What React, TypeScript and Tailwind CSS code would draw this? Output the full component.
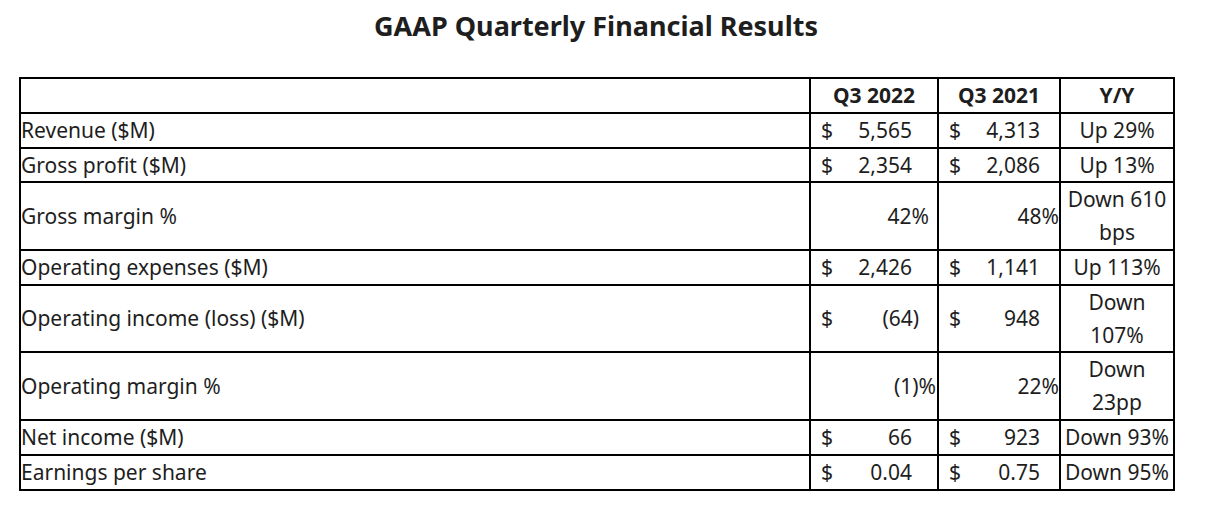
type Money = { v: string; pr: string };

type Row = {
  label: string;
  a: Money | { pct: string; pr: string };
  b: Money | { pct: string; pr: string };
  yy: string[];
};

const rows: Row[] = [
  { label: "Revenue ($M)", a: { v: "5,565", pr: "pr-[25px]" }, b: { v: "4,313", pr: "pr-[19px]" }, yy: ["Up 29%"] },
  { label: "Gross profit ($M)", a: { v: "2,354", pr: "pr-[25px]" }, b: { v: "2,086", pr: "pr-[19px]" }, yy: ["Up 13%"] },
  { label: "Gross margin %", a: { pct: "42%", pr: "pr-[8px]" }, b: { pct: "48%", pr: "pr-0" }, yy: ["Down 610", "bps"] },
  { label: "Operating expenses ($M)", a: { v: "2,426", pr: "pr-[25px]" }, b: { v: "1,141", pr: "pr-[19px]" }, yy: ["Up 113%"] },
  { label: "Operating income (loss) ($M)", a: { v: "(64)", pr: "pr-[18px]" }, b: { v: "948", pr: "pr-[19px]" }, yy: ["Down", "107%"] },
  { label: "Operating margin %", a: { pct: "(1)%", pr: "pr-[1px]" }, b: { pct: "22%", pr: "pr-0" }, yy: ["Down", "23pp"] },
  { label: "Net income ($M)", a: { v: "66", pr: "pr-[25px]" }, b: { v: "923", pr: "pr-[19px]" }, yy: ["Down 93%"] },
  { label: "Earnings per share", a: { v: "0.04", pr: "pr-[25px]" }, b: { v: "0.75", pr: "pr-[19px]" }, yy: ["Down 95%"] },
];

function ValueCell({ c }: { c: Row["a"] }) {
  if ("pct" in c) {
    return (
      <td className={`border-2 border-black p-0 align-middle text-right whitespace-nowrap ${c.pr}`}>
        {c.pct}
      </td>
    );
  }
  return (
    <td className="border-2 border-black p-0 align-middle whitespace-nowrap">
      <div className={`flex justify-between pl-[10px] ${c.pr}`}>
        <span>$</span>
        <span>{c.v}</span>
      </div>
    </td>
  );
}

export default function App() {
  return (
    <div
      className="w-[1212px] h-[512px] bg-white text-[#1e1e1e]"
      style={{ fontFamily: '"Noto Sans", "Open Sans", Arial, sans-serif' }}
    >
      <div className="w-[1154px] ml-[19px]">
        <h2 className="pt-[9px] text-center text-[27px] font-bold leading-[33px]">
          GAAP Quarterly Financial Results
        </h2>
        <table className="mt-[35px] w-[1154px] table-fixed border-collapse border-2 border-black text-[21px] leading-[32.8px]">
          <colgroup>
            <col className="w-[790px]" />
            <col className="w-[128px]" />
            <col className="w-[122px]" />
            <col className="w-[114px]" />
          </colgroup>
          <thead>
            <tr>
              <th className="border-2 border-black p-0"></th>
              <th className="border-2 border-black p-0 font-bold text-center">Q3 2022</th>
              <th className="border-2 border-black p-0 font-bold text-center">Q3 2021</th>
              <th className="border-2 border-black p-0 font-bold text-center">Y/Y</th>
            </tr>
          </thead>
          <tbody>
            {rows.map((r) => (
              <tr key={r.label}>
                <td className="border-2 border-black p-0 align-middle text-left whitespace-nowrap">
                  {r.label}
                </td>
                <ValueCell c={r.a} />
                <ValueCell c={r.b} />
                <td className="border-2 border-black p-0 align-middle text-center whitespace-nowrap">
                  {r.yy.map((l, i) => (
                    <div key={i}>{l}</div>
                  ))}
                </td>
              </tr>
            ))}
          </tbody>
        </table>
      </div>
    </div>
  );
}
